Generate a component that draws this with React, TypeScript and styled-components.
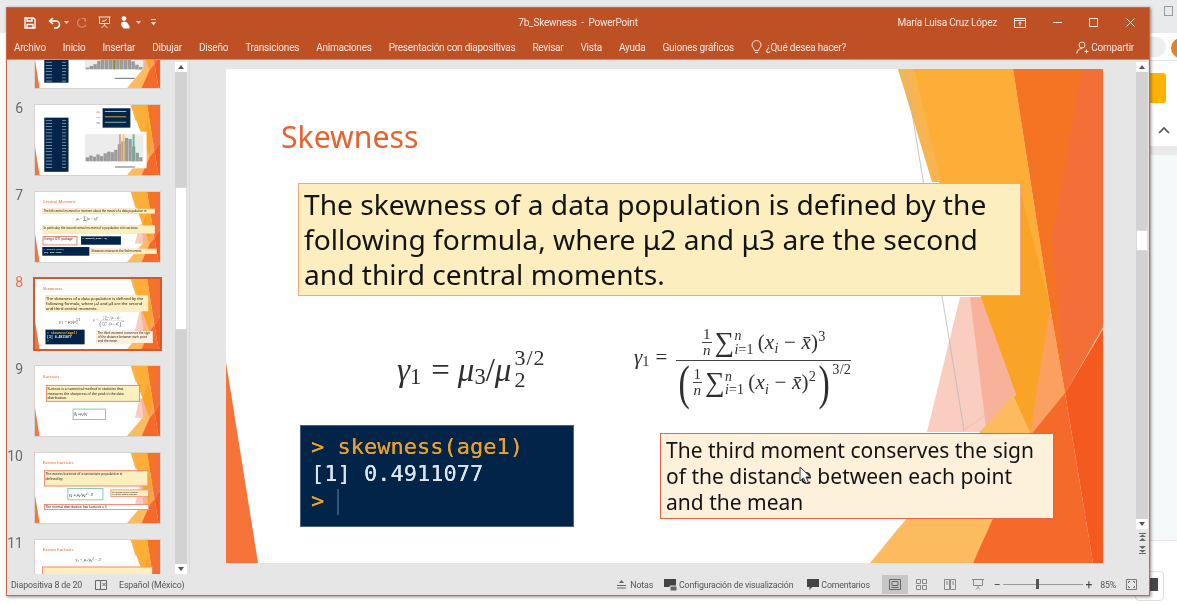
import React from "react";
import styled, { createGlobalStyle } from "styled-components";

const uiFont = `Roboto, "Noto Sans", sans-serif`;
const slideFont = `"Noto Sans", "Open Sans", sans-serif`;
const mathFont = `"Liberation Serif", "DejaVu Serif", serif`;

const GlobalStyle = createGlobalStyle`
  html, body { margin: 0; padding: 0; background: #fff; overflow: hidden; }
  * { box-sizing: border-box; }
`;

const Desktop = styled.div`
  position: relative;
  width: 1177px;
  height: 605px;
  padding: 7px 0 0 6px;
  overflow: hidden;
  background: #fff;
  font-family: ${uiFont};
  filter: blur(0.45px);
`;

const BackTop = styled.div`
  position: absolute;
  left: 0;
  top: 0;
  width: 1177px;
  height: 33px;
  background: #e8eaeb;
`;
const BackSquare = styled.div`
  position: absolute;
  left: 1164px;
  top: 6px;
  width: 9px;
  height: 10px;
  border: 1px solid #9a9a9a;
`;
const BackPill = styled.div`
  position: absolute;
  left: 1150px;
  top: 37px;
  width: 16px;
  height: 20px;
  background: #eceeef;
  border-radius: 0 10px 10px 0;
`;
const BackAvatar = styled.div`
  position: absolute;
  left: 1171px;
  top: 38px;
  width: 20px;
  height: 20px;
  border-radius: 50%;
  background: #ef7d1a;
`;
const BackLine = styled.div`
  position: absolute;
  left: 1150px;
  top: 60px;
  width: 27px;
  height: 1px;
  background: #e2e2e2;
`;
const BackButton = styled.div`
  position: absolute;
  left: 1148px;
  top: 73px;
  width: 18px;
  height: 30px;
  border-radius: 3px;
  background: #feb300;
`;
const BackChevron = styled.svg`
  position: absolute;
  left: 1158px;
  top: 126px;
`;
const BackBand = styled.div`
  position: absolute;
  left: 1150px;
  top: 146px;
  width: 27px;
  height: 395px;
  background: #f6f9f9;
  border-top: 9px solid #e9e9e9;
  border-bottom: 1px solid #e4e4e4;
`;
const BackChip = styled.div`
  position: absolute;
  left: 1135px;
  top: 571px;
  width: 29px;
  height: 30px;
  border: 1px solid #dedede;
  border-radius: 4px;
`;
const BackChipDark = styled.div`
  position: absolute;
  left: 1150px;
  top: 578px;
  width: 8px;
  height: 13px;
  background: #45474a;
`;

const Window = styled.div`
  position: relative;
  width: 1144px;
  height: 589px;
  display: flex;
  flex-direction: column;
  background: #e6e6e6;
  border: 1px solid #c9674a;
  box-shadow: 1px 1px 3px rgba(70, 40, 30, 0.55);
`;

const TitleBar = styled.div`
  height: 29px;
  flex: none;
  display: grid;
  grid-template-columns: 1fr auto 1fr;
  align-items: center;
  background: #be5025;
  color: #f8e6de;
  font-size: 10px;
  letter-spacing: -0.2px;
`;
const QuickAccess = styled.div`
  display: flex;
  align-items: center;
  padding-left: 17px;
`;
const QuickIcon = styled.svg<{ $gap?: number }>`
  display: block;
  margin-right: ${(p) => p.$gap ?? 0}px;
`;
const WindowTitle = styled.div`
  white-space: nowrap;
`;
const WindowControls = styled.div`
  display: flex;
  align-items: center;
  justify-content: flex-end;
  padding-right: 14px;
`;
const UserName = styled.span`
  margin-right: 17px;
  white-space: nowrap;
`;

const TabBar = styled.div`
  height: 23px;
  flex: none;
  display: flex;
  align-items: center;
  gap: 17px;
  padding: 0 15px 2px 7px;
  background: #be5025;
  border-bottom: 1px solid #d98a6a;
  color: #f8e6de;
  font-size: 10px;
  letter-spacing: -0.23px;
  white-space: nowrap;
`;
const Tab = styled.span``;
const TellMe = styled.span`
  display: flex;
  align-items: center;
  gap: 4px;
`;
const Share = styled.span`
  margin-left: auto;
  display: flex;
  align-items: center;
  gap: 2px;
`;

const Body = styled.div`
  flex: 1;
  min-height: 0;
  display: flex;
`;
const ThumbPane = styled.div`
  width: 183px;
  flex: none;
  display: flex;
  border-right: 1px solid #d8d8d8;
`;
const ThumbList = styled.div`
  flex: 1;
  min-width: 0;
  overflow: hidden;
  display: flex;
  flex-direction: column;
  gap: 17px;
`;
const ThumbRow = styled.div<{ $first?: boolean }>`
  display: flex;
  flex: none;
  margin-top: ${(p) => (p.$first ? "-42px" : "0")};
`;
const ThumbNumber = styled.span<{ $active?: boolean }>`
  width: 16px;
  height: 12px;
  margin-right: 12px;
  flex: none;
  text-align: right;
  font-size: 14px;
  line-height: 7px;
  color: ${(p) => (p.$active ? "#df7350" : "#6a6a6a")};
`;
const ThumbFrame = styled.div<{ $active?: boolean }>`
  width: 125px;
  height: 70px;
  outline: ${(p) => (p.$active ? "2px solid #cf5a2c" : "1px solid #d6d2d0")};
`;
const ThumbClip = styled.div`
  width: 125px;
  height: 70px;
  overflow: hidden;
`;
const ThumbScale = styled.div`
  width: 877px;
  height: 494px;
  transform: scale(0.1425);
  transform-origin: 0 0;
`;

const ScrollBar = styled.div<{ $wide?: boolean }>`
  width: 12px;
  flex: none;
  margin-right: ${(p) => (p.$wide ? "1px" : "2px")};
  padding-top: 2px;
  display: flex;
  flex-direction: column;
  align-items: stretch;
`;
const ScrollArrow = styled.div<{ $down?: boolean }>`
  height: 10px;
  flex: none;
  display: flex;
  align-items: center;
  justify-content: center;
  background: #fff;
  &::before {
    content: "";
    border-left: 3.5px solid transparent;
    border-right: 3.5px solid transparent;
    ${(p) =>
      p.$down ? "border-top: 4px solid #555;" : "border-bottom: 4px solid #555;"}
  }
`;
const ScrollTrack = styled.div`
  flex: 1;
  display: flex;
  flex-direction: column;
  background: #d2d2d2;
`;
const ScrollThumb = styled.div<{ $top: number; $height: number }>`
  margin-top: ${(p) => p.$top}px;
  height: ${(p) => p.$height}px;
  background: #fff;
  border: 1px solid #dadada;
`;
const PageArrows = styled.div`
  height: 45px;
  flex: none;
  padding-top: 3px;
  display: flex;
  flex-direction: column;
  align-items: center;
  gap: 3px;
`;

const Stage = styled.div`
  flex: 1;
  min-width: 0;
  padding: 9px 0 0 36px;
  background: #e6e6e6;
`;

const SlideSurface = styled.div`
  position: relative;
  width: 877px;
  height: 494px;
  background: #fff;
  overflow: hidden;
  font-family: ${slideFont};
`;
const Decor = styled.svg`
  position: absolute;
  left: 0;
  top: 0;
`;
const Pointer = styled.svg`
  position: absolute;
  left: 573px;
  top: 397px;
`;
const SlideTitle = styled.div<{ $x: number; $y: number; $size: number }>`
  position: absolute;
  left: ${(p) => p.$x}px;
  top: ${(p) => p.$y}px;
  color: #e8622e;
  font-size: ${(p) => p.$size}px;
  line-height: 1.2;
  white-space: nowrap;
`;
const SlideBox = styled.div<{
  $x: number;
  $y: number;
  $w: number;
  $h: number;
  $size?: number;
  $line?: number;
  $fill?: string;
  $edge?: string;
  $edgeWidth?: number;
}>`
  position: absolute;
  left: ${(p) => p.$x}px;
  top: ${(p) => p.$y}px;
  width: ${(p) => p.$w}px;
  height: ${(p) => p.$h}px;
  padding: 3px 5px;
  background: ${(p) => p.$fill ?? "#fdeec0"};
  border: ${(p) => p.$edgeWidth ?? 1}px solid ${(p) => p.$edge ?? "#f3a67c"};
  color: #141414;
  font-size: ${(p) => p.$size ?? 28.15}px;
  line-height: ${(p) => p.$line ?? 35}px;
  white-space: nowrap;
`;
const CodeBox = styled.div<{
  $x: number;
  $y: number;
  $w: number;
  $h: number;
  $size?: number;
  $line?: number;
}>`
  position: absolute;
  left: ${(p) => p.$x}px;
  top: ${(p) => p.$y}px;
  width: ${(p) => p.$w}px;
  height: ${(p) => p.$h}px;
  padding-left: 10px;
  overflow: hidden;
  background: #022448;
  border: 1px solid #46627f;
  font-family: "DejaVu Sans Mono", "Liberation Mono", monospace;
  font-size: ${(p) => p.$size ?? 22}px;
  line-height: ${(p) => p.$line ?? 27}px;
  white-space: pre;
`;
const CodeLine = styled.div<{ $tone: "prompt" | "output"; $shift?: number }>`
  color: ${(p) => (p.$tone === "prompt" ? "#eda123" : "#dde5ec")};
  text-shadow: 0 0 0.6px currentColor;
  margin-top: ${(p) => p.$shift ?? 0}px;
`;
const Caret = styled.span`
  display: inline-block;
  width: 2px;
  height: 26px;
  margin-left: 13px;
  vertical-align: -7px;
  background: #32557a;
`;

const Formula = styled.div<{ $x: number; $y: number; $size: number }>`
  position: absolute;
  left: ${(p) => p.$x}px;
  top: ${(p) => p.$y}px;
  display: flex;
  align-items: center;
  font-family: ${mathFont};
  font-size: ${(p) => p.$size}px;
  line-height: 1;
  color: #2f2f2f;
  white-space: nowrap;
`;
const LeftSide = styled.span`
  display: flex;
  align-items: center;
  margin-bottom: 17px;
`;
const Var = styled.i`
  font-style: italic;
`;
const Sub = styled.span<{ $size?: number; $drop?: number }>`
  font-size: ${(p) => p.$size ?? 0.68}em;
  position: relative;
  top: ${(p) => p.$drop ?? 0.3}em;
`;
const Sup = styled.span<{ $lift?: number }>`
  font-size: 0.68em;
  position: relative;
  top: ${(p) => -(p.$lift ?? 0.6)}em;
`;
const Rel = styled.span<{ $left: number; $right: number }>`
  margin: 0 ${(p) => p.$right}px 0 ${(p) => p.$left}px;
`;
const Script = styled.span`
  display: inline-flex;
  flex-direction: column;
  margin-left: 3px;
  font-size: 22px;
  line-height: 22px;
  letter-spacing: 1px;
  margin-top: -3px;
`;
const Fraction = styled.span`
  display: inline-flex;
  flex-direction: column;
  align-items: center;
  letter-spacing: 0.2px;
`;
const Numerator = styled.span`
  display: flex;
  align-items: center;
  justify-content: center;
  width: 100%;
  padding-bottom: 2px;
  border-bottom: 1px solid #444;
`;
const Denominator = styled.span`
  display: flex;
  align-items: center;
`;
const MiniFraction = styled.span`
  display: inline-flex;
  flex-direction: column;
  align-items: center;
  font-size: 0.72em;
  line-height: 1;
  margin-right: 3px;
`;
const MiniNumerator = styled.span`
  padding: 0 1px;
  border-bottom: 1px solid #444;
`;
const SumSign = styled.span`
  font-size: 1.3em;
  line-height: 1;
`;
const Limits = styled.span`
  display: inline-flex;
  flex-direction: column;
  font-size: 0.66em;
  line-height: 0.95;
  margin-right: 4px;
`;
const BigParen = styled.span`
  font-size: 2.3em;
  line-height: 0.9;
  transform: scaleX(0.7);
`;

const StatusBar = styled.div`
  height: 21px;
  flex: none;
  display: flex;
  align-items: center;
  padding: 0 12px 0 4px;
  background: #e6e6e6;
  color: #555;
  font-size: 8.8px;
  letter-spacing: -0.17px;
  white-space: nowrap;
`;
const StatusItem = styled.span<{ $gap?: number }>`
  display: flex;
  align-items: center;
  gap: 2px;
  margin-right: ${(p) => p.$gap ?? 0}px;
`;
const StatusSpacer = styled.div`
  flex: 1;
`;
const ViewButton = styled.span<{ $active?: boolean; $gap: number }>`
  width: ${(p) => (p.$active ? 26 : 14)}px;
  height: 19px;
  display: flex;
  align-items: center;
  justify-content: center;
  margin-right: ${(p) => p.$gap}px;
  background: ${(p) => (p.$active ? "#c6c6c6" : "transparent")};
`;
const ZoomTrack = styled.span`
  position: relative;
  width: 80px;
  height: 1px;
  margin: 0 3px 0 2px;
  background: #9a9a9a;
`;
const ZoomHandle = styled.span`
  position: absolute;
  left: 33px;
  top: -5px;
  width: 3px;
  height: 10px;
  background: #555;
`;
const ZoomSign = styled.span<{ $gap?: number }>`
  margin-right: ${(p) => p.$gap ?? 0}px;
  font-size: 12px;
  line-height: 12px;
  color: #444;
`;

const Decoration = () => (
  <Decor width={877} height={494} viewBox="0 0 877 494">
    <polygon points="0,293 32,494 0,494" fill="#f8733a" />
    <polygon points="754,228 824,238 839,324 804,400 754,363" fill="#f9a427" />
    <polygon points="701,363 734,228 755,228 790,326 754,363" fill="#f9cdbf" />
    <polygon points="744,228 755,228 790,326 760,358" fill="#f8b29b" />
    <polygon points="672,0 787,0 824,238 804,363" fill="#fcae39" />
    <polygon points="672,0 688,0 715,113 706,113" fill="#f8b54f" />
    <polygon points="755,228 794,120 824,238 804,363" fill="#f9a427" />
    <polygon points="787,326 804,363 816,363 747,494 644,494 671,461 754,363" fill="#fdbb60" />
    <polygon points="787,0 877,0 877,258 839,324 824,238" fill="#f57423" />
    <polygon points="856,0 877,0 877,258 839,324 826,170" fill="#f46f37" />
    <polygon points="824,238 839,324 804,367" fill="#fca062" />
    <polygon points="839,324 867,494 747,494 804,367" fill="#f5692b" />
    <polygon points="877,260 877,494 867,494 839,324" fill="#f45a20" />
    <line x1="679" y1="1" x2="738" y2="361" stroke="#b9b9b9" strokeWidth="0.8" />
    <line x1="737" y1="362" x2="787" y2="326" stroke="#e8b9a6" strokeWidth="0.8" />
  </Decor>
);

const SkewnessContent = () => (
  <>
    <SlideTitle $x={55} $y={50} $size={30.2}>
      Skewness
    </SlideTitle>
    <SlideBox $x={72} $y={114} $w={723} $h={113}>
      The skewness of a data population is defined by the
      <br />
      following formula, where μ2 and μ3 are the second
      <br />
      and third central moments.
    </SlideBox>
    <Formula $x={171} $y={281} $size={33}>
      <Var>γ</Var>
      <Sub>1</Sub>
      <Rel $left={10} $right={8}>
        =
      </Rel>
      <Var>μ</Var>
      <Sub>3</Sub>
      <span>/</span>
      <Var>μ</Var>
      <Script>
        <span>3/2</span>
        <span>2</span>
      </Script>
    </Formula>
    <Formula $x={408} $y={258} $size={21}>
      <LeftSide>
        <Var>γ</Var>
        <Sub>1</Sub>
        <Rel $left={6} $right={9}>
          =
        </Rel>
      </LeftSide>
      <Fraction>
        <Numerator>
          <MiniFraction>
            <MiniNumerator>1</MiniNumerator>
            <Var>n</Var>
          </MiniFraction>
          <SumSign>∑</SumSign>
          <Limits>
            <Var>n</Var>
            <span>
              <Var>i</Var>=1
            </span>
          </Limits>
          <span>
            (<Var>x</Var>
            <Sub $size={0.66}>
              <Var>i</Var>
            </Sub>{" "}
            − <Var>x̄</Var>)<Sup>3</Sup>
          </span>
        </Numerator>
        <Denominator>
          <BigParen>(</BigParen>
          <MiniFraction>
            <MiniNumerator>1</MiniNumerator>
            <Var>n</Var>
          </MiniFraction>
          <SumSign>∑</SumSign>
          <Limits>
            <Var>n</Var>
            <span>
              <Var>i</Var>=1
            </span>
          </Limits>
          <span>
            (<Var>x</Var>
            <Sub $size={0.66}>
              <Var>i</Var>
            </Sub>{" "}
            − <Var>x̄</Var>)<Sup>2</Sup>
          </span>
          <BigParen>)</BigParen>
          <Sup $lift={0.95}>3/2</Sup>
        </Denominator>
      </Fraction>
    </Formula>
    <CodeBox $x={74} $y={356} $w={274} $h={102}>
      <CodeLine $tone="prompt" $shift={-20}>
        {">"}
      </CodeLine>
      <CodeLine $tone="prompt">{"> skewness(age1)"}</CodeLine>
      <CodeLine $tone="output">{"[1] 0.4911077"}</CodeLine>
      <CodeLine $tone="prompt">
        {">"}
        <Caret />
      </CodeLine>
    </CodeBox>
    <SlideBox
      $x={434}
      $y={364}
      $w={394}
      $h={86}
      $size={21}
      $line={26}
      $fill="#fef1dc"
      $edge="#e2654a"
    >
      The third moment conserves the sign
      <br />
      of the distance between each point
      <br />
      and the mean
    </SlideBox>
  </>
);

const bars6 = [14, 20, 16, 24, 18, 28, 34, 32, 40, 60, 70, 82, 78, 52, 30, 14];
const bars5 = [6, 12, 18, 30, 44, 60, 74, 86, 92, 78, 60, 44, 28, 16, 8];
const tableRows = Array.from({ length: 16 }, (_, i) => i);

const HistogramSlide = ({ bars, legend }: { bars: number[]; legend: boolean }) => (
  <Decor width={877} height={494} viewBox="0 0 877 494">
    <rect x="65" y={legend ? 89 : -120} width="170" height={legend ? 380 : 574} fill="#03254a" stroke="#5a7894" />
    {tableRows.map((i) => (
      <g key={i} fill="#9fb3c6">
        <rect x="76" y={(legend ? 105 : 110) + i * 22} width="44" height="5" />
        <rect x="190" y={(legend ? 105 : 110) + i * 22} width="28" height="5" />
      </g>
    ))}
    {legend && (
      <>
        <rect x="475" y="23" width="194" height="136" fill="#03254a" stroke="#5a7894" />
        <rect x="430" y="46" width="26" height="8" fill="#f4a27a" />
        <rect x="430" y="84" width="26" height="8" fill="#f6c64a" />
        <rect x="430" y="122" width="26" height="8" fill="#6fbf9b" />
        <rect x="490" y="42" width="150" height="6" fill="#c8d3c2" />
        <rect x="490" y="80" width="150" height="6" fill="#e0b94d" />
        <rect x="490" y="118" width="150" height="6" fill="#9ac9a8" />
      </>
    )}
    <rect x="327" y={legend ? 187 : 0} width="456" height="257" fill="#fff" />
    <rect x="350" y={legend ? 205 : 0} width="410" height={legend ? 190 : 360} fill="#ececec" />
    {bars.map((h, i) => (
      <rect
        key={i}
        x={356 + (i * 400) / bars.length}
        y={(legend ? 395 : 360) - h * 2}
        width={400 / bars.length - 2}
        height={h * 2}
        fill="#9b9b9b"
      />
    ))}
    {legend ? (
      <>
        <rect x="590" y="205" width="12" height="190" fill="#e8917a" opacity="0.9" />
        <rect x="616" y="205" width="12" height="190" fill="#f6c64a" opacity="0.9" />
        <rect x="685" y="205" width="14" height="190" fill="#5fb592" opacity="0.9" />
      </>
    ) : (
      <rect x="552" y="0" width="10" height="360" fill="#8c8a1e" />
    )}
    <rect x="560" y={legend ? 432 : 420} width="140" height="6" fill="#555" />
  </Decor>
);

const CentralSlide = () => (
  <>
    <SlideTitle $x={55} $y={50} $size={30}>
      Central Moment
    </SlideTitle>
    <SlideBox $x={54} $y={117} $w={788} $h={35} $size={20} $line={26} $edge="#e9734f">
      The kth central moment (or moment about the mean) of a data population is:
    </SlideBox>
    <Formula $x={292} $y={170} $size={26}>
      <Var>μ</Var>
      <Sub>k</Sub>
      <Rel $left={5} $right={5}>
        =
      </Rel>
      <SumSign>∑</SumSign>
      <Var>(x − x̄)</Var>
      <Sup>k</Sup>
    </Formula>
    <SlideBox $x={54} $y={234} $w={788} $h={58} $size={20} $line={26}>
      In particular, the second central moment of a population is its variance.
    </SlideBox>
    <SlideBox $x={54} $y={311} $w={243} $h={63} $size={20} $line={26} $fill="#fff" $edge="#e0553a" $edgeWidth={5}>
      Using e1071 package
    </SlideBox>
    <CodeBox $x={323} $y={311} $w={280} $h={59} $size={17} $line={22}>
      <CodeLine $tone="output">{"> moment(age1, 2)"}</CodeLine>
    </CodeBox>
    <CodeBox $x={51} $y={386} $w={330} $h={61} $size={17} $line={22}>
      <CodeLine $tone="prompt">{"> moment(age1)"}</CodeLine>
      <CodeLine $tone="output">{"[1] 196.7056"}</CodeLine>
    </CodeBox>
    <SlideBox $x={391} $y={398} $w={463} $h={37} $size={20} $line={26}>
      Skewness measures the 3rd moment.
    </SlideBox>
  </>
);

const KurtosisSlide = () => (
  <>
    <SlideTitle $x={55} $y={52} $size={30}>
      Kurtosis
    </SlideTitle>
    <SlideBox $x={77} $y={133} $w={660} $h={117} $size={24} $line={33} $edge="#e9654a" $edgeWidth={5}>
      Kurtosis is a numerical method in statistics that
      <br />
      measures the sharpness of the peak in the data
      <br />
      distribution.
    </SlideBox>
    <SlideBox $x={264} $y={299} $w={234} $h={80} $size={21} $line={60} $fill="#fff" $edge="#7fcdb8" $edgeWidth={7}>
      <Var>β₂ = μ₄/μ₂²</Var>
    </SlideBox>
  </>
);

const ExcessSlide = () => (
  <>
    <SlideTitle $x={55} $y={50} $size={30}>
      Excess Kurtosis
    </SlideTitle>
    <SlideBox $x={63} $y={122} $w={732} $h={112} $size={24} $line={33} $edge="#e9654a" $edgeWidth={5}>
      The excess kurtosis of a univariate population is
      <br />
      defined by:
    </SlideBox>
    <SlideBox $x={227} $y={246} $w={253} $h={86} $size={28} $line={64} $fill="#fff" $edge="#7fcdb8" $edgeWidth={7}>
      <Var>γ₂ = μ₄/μ₂² − 3</Var>
    </SlideBox>
    <SlideBox $x={531} $y={257} $w={269} $h={52} $size={14} $line={19} $edge="#e9654a" $edgeWidth={4}>
      μ2: second central moment
      <br />
      μ4: fourth central moment
    </SlideBox>
    <SlideBox $x={63} $y={358} $w={737} $h={42} $size={23} $line={28} $fill="#fff" $edge="#e9654a" $edgeWidth={5}>
      The normal distribution has kurtosis = 3
    </SlideBox>
  </>
);

const ExcessFormulaSlide = () => (
  <>
    <SlideTitle $x={55} $y={50} $size={30}>
      Excess Kurtosis
    </SlideTitle>
    <Formula $x={285} $y={124} $size={30}>
      <Var>γ₂ = μ₄/μ₂² − 3</Var>
    </Formula>
    <SlideBox $x={51} $y={187} $w={775} $h={260} $edge="#e9654a" $edgeWidth={5} />
  </>
);

const thumbs = [
  { n: "", body: <HistogramSlide bars={bars5} legend={false} /> },
  { n: "6", body: <HistogramSlide bars={bars6} legend /> },
  { n: "7", body: <CentralSlide /> },
  { n: "8", body: <SkewnessContent />, active: true },
  { n: "9", body: <KurtosisSlide /> },
  { n: "10", body: <ExcessSlide /> },
  { n: "11", body: <ExcessFormulaSlide /> },
];

const Save = () => (
  <QuickIcon width="12" height="12" viewBox="0 0 12 12" $gap={12} fill="none" stroke="#fff" strokeWidth="1.3">
    <path d="M1 1h8.5L11 2.5V11H1z" />
    <path d="M3 1v3h5V1M3 11V7.5h6V11" />
  </QuickIcon>
);
const Caretdown = ({ gap }: { gap: number }) => (
  <QuickIcon width="5" height="3" viewBox="0 0 5 3" $gap={gap} fill="#f4ddd3">
    <path d="M0 0h5L2.5 3z" />
  </QuickIcon>
);

export default function App() {
  return (
    <Desktop>
      <GlobalStyle />
      <BackTop />
      <BackSquare />
      <BackPill />
      <BackAvatar />
      <BackLine />
      <BackButton />
      <BackChevron width="12" height="8" viewBox="0 0 12 8" fill="none" stroke="#555" strokeWidth="1.6">
        <path d="M1 7l5-5 5 5" />
      </BackChevron>
      <BackBand />
      <BackChip />
      <BackChipDark />
      <Window>
        <TitleBar>
          <QuickAccess>
            <Save />
            <QuickIcon width="13" height="12" viewBox="0 0 13 12" $gap={3} fill="none" stroke="#fff" strokeWidth="1.6">
              <path d="M5 1L1.5 4 5 7M2 4h6a3.4 3.4 0 0 1 0 7H6" />
            </QuickIcon>
            <Caretdown gap={6} />
            <QuickIcon width="11" height="12" viewBox="0 0 11 12" $gap={12} fill="none" stroke="#d98a68" strokeWidth="1.2">
              <path d="M7 1.5h3v3M9.6 2A4.5 4.5 0 1 1 5.5 1.5" />
            </QuickIcon>
            <QuickIcon width="13" height="13" viewBox="0 0 13 13" $gap={9} fill="none" stroke="#f8e6de" strokeWidth="1">
              <path d="M0.5 1h12M1.5 1v6.5h10V1M6.5 7.5V9M3.5 12l3-3 3 3" />
              <path d="M4 5h3l1.5-2" />
            </QuickIcon>
            <QuickIcon width="10" height="13" viewBox="0 0 10 13" $gap={6} fill="#fff">
              <circle cx="4" cy="2.6" r="2.4" />
              <path d="M1.5 6.5c0-1 5-1.2 5.5 0L9.5 10v2.5h-6L1 9z" />
            </QuickIcon>
            <Caretdown gap={10} />
            <QuickIcon width="5" height="7" viewBox="0 0 5 7" fill="#f4ddd3">
              <path d="M0 0h5v1H0zM0 3h5L2.5 6.5z" />
            </QuickIcon>
          </QuickAccess>
          <WindowTitle>7b_Skewness&nbsp; -&nbsp; PowerPoint</WindowTitle>
          <WindowControls>
            <UserName>María Luisa Cruz López</UserName>
            <QuickIcon width="12" height="10" viewBox="0 0 12 10" $gap={27} fill="none" stroke="#f8e6de">
              <path d="M.5.5h11v9H.5zM.5 2.5h11M6 8V4M4.3 5.5L6 3.8l1.7 1.7" />
            </QuickIcon>
            <QuickIcon width="9" height="9" viewBox="0 0 9 9" $gap={27} stroke="#f8e6de">
              <path d="M0 4.5h9" />
            </QuickIcon>
            <QuickIcon width="9" height="9" viewBox="0 0 9 9" $gap={28} fill="none" stroke="#f8e6de">
              <path d="M.5.5h8v8h-8z" />
            </QuickIcon>
            <QuickIcon width="9" height="9" viewBox="0 0 9 9" stroke="#f8e6de">
              <path d="M.5.5l8 8M8.5.5l-8 8" />
            </QuickIcon>
          </WindowControls>
        </TitleBar>
        <TabBar>
          {[
            "Archivo",
            "Inicio",
            "Insertar",
            "Dibujar",
            "Diseño",
            "Transiciones",
            "Animaciones",
            "Presentación con diapositivas",
            "Revisar",
            "Vista",
            "Ayuda",
            "Guiones gráficos",
          ].map((t) => (
            <Tab key={t}>{t}</Tab>
          ))}
          <TellMe>
            <svg width="11" height="14" viewBox="0 0 11 14" fill="none" stroke="#f8e6de">
              <path d="M3.5 10.5C3 8 1 7.2 1 5a4.5 4.5 0 0 1 9 0c0 2.2-2 3-2.5 5.5zM4 12.5h3" />
            </svg>
            ¿Qué desea hacer?
          </TellMe>
          <Share>
            <svg width="13" height="13" viewBox="0 0 13 13" fill="none" stroke="#f8e6de">
              <circle cx="6" cy="4" r="3" />
              <path d="M.8 12.5C1 9.5 3 7.5 6 7.5M8.5 10.5h4M10.5 8.5v4" />
            </svg>
            Compartir
          </Share>
        </TabBar>
        <Body>
          <ThumbPane>
            <ThumbList>
              {thumbs.map((t, i) => (
                <ThumbRow key={i} $first={i === 0}>
                  <ThumbNumber $active={t.active}>{t.n}</ThumbNumber>
                  <ThumbFrame $active={t.active}>
                    <ThumbClip>
                      <ThumbScale>
                        <SlideSurface>
                          <Decoration />
                          {t.body}
                        </SlideSurface>
                      </ThumbScale>
                    </ThumbClip>
                  </ThumbFrame>
                </ThumbRow>
              ))}
            </ThumbList>
            <ScrollBar>
              <ScrollArrow />
              <ScrollTrack>
                <ScrollThumb $top={115} $height={143} />
              </ScrollTrack>
              <ScrollArrow $down />
            </ScrollBar>
          </ThumbPane>
          <Stage>
            <SlideSurface>
              <Decoration />
              <SkewnessContent />
              <Pointer width="13" height="19" viewBox="0 0 13 19" fill="#fff" stroke="#333" strokeWidth="1">
                <path d="M1 1v14l3.5-3 2.5 5.5 2.5-1-2.5-5.5h4.5z" />
              </Pointer>
            </SlideSurface>
          </Stage>
          <ScrollBar $wide>
            <ScrollArrow />
            <ScrollTrack>
              <ScrollThumb $top={158} $height={21} />
            </ScrollTrack>
            <ScrollArrow $down />
            <PageArrows>
              <svg width="7" height="10" viewBox="0 0 7 10" fill="#666">
                <path d="M0 1h7v1H0zM3.5 2.5L7 5H0zM3.5 6L7 9H0z" />
              </svg>
              <svg width="7" height="10" viewBox="0 0 7 10" fill="#666">
                <path d="M0 8h7v1H0zM3.5 7.5L7 5H0zM3.5 4L7 1H0z" />
              </svg>
            </PageArrows>
          </ScrollBar>
        </Body>
        <StatusBar>
          <StatusItem $gap={13}>Diapositiva 8 de 20</StatusItem>
          <StatusItem $gap={12}>
            <svg width="12" height="10" viewBox="0 0 12 10" fill="none" stroke="#666">
              <path d="M.5.5h5v9h-5zM5.5.5h6v9h-6zM7.5 3l3 3M10.5 3l-3 3" />
            </svg>
          </StatusItem>
          <StatusItem>Español (México)</StatusItem>
          <StatusSpacer />
          <StatusItem $gap={11}>
            <svg width="9" height="9" viewBox="0 0 9 9" fill="#666" stroke="none">
              <path d="M4.5 0L7 3H2zM0 5h9v1H0zM0 7.5h9v1H0z" />
            </svg>
            &nbsp;Notas
          </StatusItem>
          <StatusItem $gap={14}>
            <svg width="13" height="12" viewBox="0 0 13 12" fill="#444">
              <path d="M0 0h12v8H0z" />
              <path d="M6 7h7v5H6z" fill="#666" stroke="#e6e6e6" />
            </svg>
            Configuración de visualización
          </StatusItem>
          <StatusItem $gap={12}>
            <svg width="12" height="11" viewBox="0 0 12 11" fill="#444">
              <path d="M0 0h12v8H5l-2.5 3V8H0z" />
            </svg>
            Comentarios
          </StatusItem>
          <ViewButton $active $gap={7}>
            <svg width="12" height="11" viewBox="0 0 12 11" fill="none" stroke="#666">
              <path d="M.5.5h11v10H.5zM3 2.5h6v4H3zM2.5 8.5h7" />
            </svg>
          </ViewButton>
          <ViewButton $gap={14}>
            <svg width="11" height="11" viewBox="0 0 11 11" fill="none" stroke="#888">
              <path d="M.5.5h4v4h-4zM6.5.5h4v4h-4zM.5 6.5h4v4h-4zM6.5 6.5h4v4h-4z" />
            </svg>
          </ViewButton>
          <ViewButton $gap={14}>
            <svg width="12" height="11" viewBox="0 0 12 11" fill="none" stroke="#888">
              <path d="M.5.5h5v10h-5zM6.5.5h5v10h-5zM2 3h2M2 5h2M8 3h2M8 5h2" />
            </svg>
          </ViewButton>
          <ViewButton $gap={9}>
            <svg width="12" height="11" viewBox="0 0 12 11" fill="none" stroke="#888">
              <path d="M0 .5h12M1.5.5v6h9v-6M6 6.5v2M4 10.5l2-2 2 2" />
            </svg>
          </ViewButton>
          <ZoomSign>−</ZoomSign>
          <ZoomTrack>
            <ZoomHandle />
          </ZoomTrack>
          <ZoomSign $gap={4}>+</ZoomSign>
          <StatusItem $gap={10}>&nbsp;&nbsp;85%</StatusItem>
          <svg width="11" height="11" viewBox="0 0 11 11" fill="none" stroke="#777">
            <path d="M.5.5h10v10H.5zM2.5 4V2.5H4M7 2.5h1.5V4M2.5 7v1.5H4M7 8.5h1.5V7" />
          </svg>
        </StatusBar>
      </Window>
    </Desktop>
  );
}
